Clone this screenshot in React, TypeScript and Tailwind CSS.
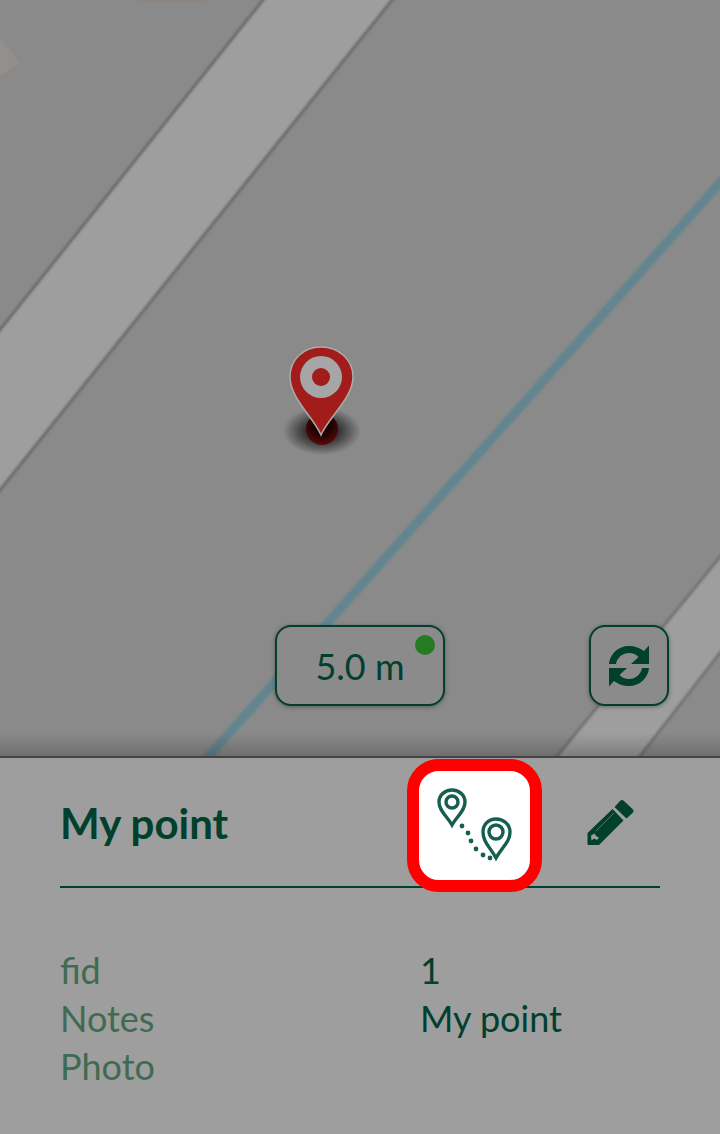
const green = "#00402d"

function MapLayer() {
  return (
    <svg className="absolute inset-0" width="720" height="760" viewBox="0 0 720 760">
      <defs>
        <radialGradient id="pinShadow">
          <stop offset="0%" stopColor="#000" stopOpacity="0.95" />
          <stop offset="45%" stopColor="#000" stopOpacity="0.6" />
          <stop offset="100%" stopColor="#000" stopOpacity="0" />
        </radialGradient>
        <radialGradient id="pinBase" cx="50%" cy="35%" r="65%">
          <stop offset="0%" stopColor="#0c0000" />
          <stop offset="55%" stopColor="#260202" />
          <stop offset="100%" stopColor="#5c0a0a" />
        </radialGradient>
        <filter id="soft">
          <feGaussianBlur stdDeviation="0.8" />
        </filter>
        <filter id="softPin">
          <feGaussianBlur stdDeviation="0.4" />
        </filter>
      </defs>
      <rect width="720" height="760" fill="#8a8a8a" />
      <g filter="url(#soft)">
        <polygon points="-20,10 21,63 -20,90" fill="#92908d" stroke="#8d8783" strokeWidth="1.5" />
        <rect x="138" y="-4" width="70" height="5" fill="#8f8378" />
        <polygon points="303,-50 432,-50 -40,540 -40,380" fill="#9e9e9e" />
        <line x1="303" y1="-50" x2="-40" y2="380" stroke="#6a6a6a" strokeWidth="3" />
        <line x1="432" y1="-50" x2="-40" y2="540" stroke="#6a6a6a" strokeWidth="3" />
        <line x1="760" y1="138" x2="190" y2="777" stroke="#64858f" strokeWidth="9" />
        <polygon points="760,508 760,601 620,782 536,782" fill="#9e9e9e" />
        <line x1="760" y1="508" x2="536" y2="782" stroke="#727272" strokeWidth="3" />
        <line x1="760" y1="601" x2="620" y2="782" stroke="#727272" strokeWidth="3" />
      </g>
      <ellipse cx="322" cy="431" rx="39" ry="24" fill="url(#pinShadow)" />
      <ellipse cx="322" cy="429" rx="16" ry="16" fill="url(#pinBase)" />
      <g filter="url(#softPin)">
        <path
          d="M321 435 C314 418 290 398 290 377 C290 359 304 347 321 347 C338 347 353 359 353 377 C353 398 328 418 321 435 Z"
          fill="#a31b1a"
          stroke="#ababab"
          strokeWidth="1.5"
        />
        <circle cx="321" cy="377" r="21" fill="#a6a6a6" />
        <circle cx="321" cy="377" r="9" fill="#a31b1a" />
      </g>
    </svg>
  )
}

function SyncIcon() {
  return (
    <svg width="42" height="42" viewBox="0 0 42 42" fill={green}>
      <path d="M1 19 C2 9 10 1 21 1 C27 1 32 3 36 6 L41 0.5 V19 H23 L30.5 12 C28 9.5 25 8 21 8 C14 8 9 13 8 19 Z" />
      <path d="M1 19 C2 9 10 1 21 1 C27 1 32 3 36 6 L41 0.5 V19 H23 L30.5 12 C28 9.5 25 8 21 8 C14 8 9 13 8 19 Z" transform="rotate(180 21 21)" />
    </svg>
  )
}

function PencilIcon() {
  return (
    <svg width="48" height="48" viewBox="0 0 48 48" fill={green}>
      <path d="M27.5 8 L33 2 Q35 0 37 2 L45.5 10 Q47.5 12 45.5 14 L39.5 19.5 Z" />
      <path d="M25.5 10 L36.5 21.5 L12 46 L1.5 46 Q0.5 46 0.5 45 L0.5 34 Z" />
      <line x1="9" y1="32" x2="27" y2="14" stroke="#9e9e9e" strokeWidth="0.8" opacity="0.7" />
      <polygon points="4,36.5 7.5,34.5 9,37 12,38.5 10,41 7,39.5 4.5,41.5" fill="#9e9e9e" />
    </svg>
  )
}

function RouteIcon() {
  return (
    <svg className="blur-[0.4px]" width="111" height="109" viewBox="0 0 111 109" fill="none" stroke="#14604c" strokeWidth="3.4">
      <path d="M33 54 C28 45 20 40 20 31 C20 24 26 19 33 19 C40 19 46 24 46 31 C46 40 38 45 33 54 Z" />
      <circle cx="33" cy="31" r="6" />
      <path d="M77 87 C71 76 64 71 64 61 C64 53 70 48 77 48 C84 48 91 53 91 61 C91 71 83 76 77 87 Z" />
      <circle cx="77" cy="61" r="7" />
      <g fill="#14604c" stroke="none">
        <circle cx="43" cy="55" r="2.4" />
        <circle cx="49" cy="62" r="2.4" />
        <circle cx="52" cy="70" r="2.4" />
        <circle cx="57" cy="78" r="2.4" />
        <circle cx="64" cy="84" r="2.4" />
        <circle cx="71" cy="87" r="2.4" />
      </g>
    </svg>
  )
}

export default function App() {
  return (
    <div className="relative w-[720px] h-[1134px] overflow-hidden bg-[#9e9e9e] font-['Lato','Open_Sans',sans-serif]">
      <MapLayer />
      <div className="absolute left-0 right-0 top-[733px] h-[23px] bg-gradient-to-b from-transparent to-black/20" />
      <div className="relative h-[756px] flex items-end">
        <div className="w-full flex items-center pl-[275px] pr-[51px] pb-[50px]">
          <div className="relative w-[170px] h-[81px] rounded-[16px] border-2 border-[#00402d] bg-[#8b8b8b] shadow-[0_1px_4px_rgba(0,0,0,0.35)] flex items-center justify-center">
            <span className="text-[36px] text-[#00402d] leading-none">5.0 m</span>
            <span className="absolute top-[8px] right-[8px] w-[20px] h-[20px] rounded-full bg-[#257a22]" />
          </div>
          <div className="ml-auto w-[80px] h-[81px] rounded-[16px] border-2 border-[#00402d] bg-[#8b8b8b] shadow-[0_1px_4px_rgba(0,0,0,0.35)] flex items-center justify-center">
            <SyncIcon />
          </div>
        </div>
      </div>
      <div className="relative h-[378px] bg-[#9e9e9e] border-t-2 border-[#444444] px-[60px]">
        <div className="h-[130px] border-b-2 border-[#00402d] flex items-start">
          <div className="mt-[44px] text-[42px] font-bold text-[#00402d] leading-none">My point</div>
          <div className="ml-auto flex items-start">
            <div className="mt-[1px] w-[135px] h-[133px] rounded-[32px] border-[12px] border-[#ff0000] bg-white">
              <RouteIcon />
            </div>
            <div className="mt-[41px] ml-[45px] mr-[25px]">
              <PencilIcon />
            </div>
          </div>
        </div>
        <div className="mt-[58px] grid grid-cols-[360px_1fr] text-[36px] leading-[48px]">
          <div className="text-[#3f6b50]">fid</div>
          <div className="text-[#00402d]">1</div>
          <div className="text-[#3f6b50]">Notes</div>
          <div className="text-[#00402d]">My point</div>
          <div className="text-[#3f6b50]">Photo</div>
          <div />
        </div>
      </div>
    </div>
  )
}
